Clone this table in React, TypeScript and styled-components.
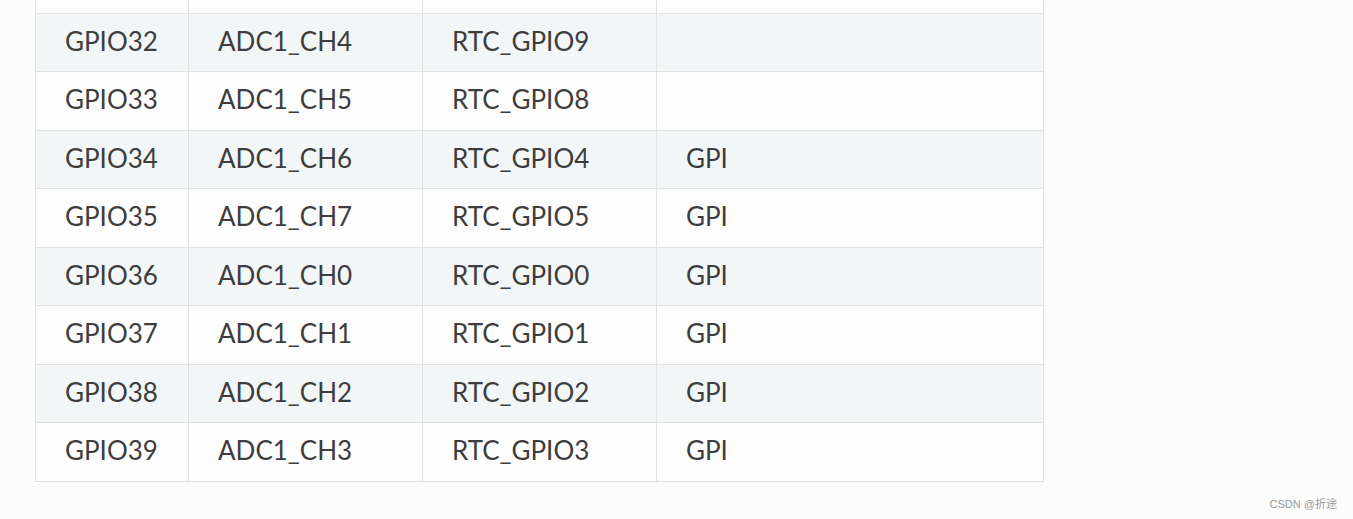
import React from 'react';
import styled, { createGlobalStyle } from 'styled-components';

const GlobalStyle = createGlobalStyle`
  html, body {
    margin: 0;
    padding: 0;
    background: #fcfcfc;
  }
  body {
    font-family: Lato, "Noto Sans", sans-serif;
  }
`;

const pins = [
  { gpio: 'GPIO32', adc: 'ADC1_CH4', rtc: 'RTC_GPIO9', mode: '' },
  { gpio: 'GPIO33', adc: 'ADC1_CH5', rtc: 'RTC_GPIO8', mode: '' },
  { gpio: 'GPIO34', adc: 'ADC1_CH6', rtc: 'RTC_GPIO4', mode: 'GPI' },
  { gpio: 'GPIO35', adc: 'ADC1_CH7', rtc: 'RTC_GPIO5', mode: 'GPI' },
  { gpio: 'GPIO36', adc: 'ADC1_CH0', rtc: 'RTC_GPIO0', mode: 'GPI' },
  { gpio: 'GPIO37', adc: 'ADC1_CH1', rtc: 'RTC_GPIO1', mode: 'GPI' },
  { gpio: 'GPIO38', adc: 'ADC1_CH2', rtc: 'RTC_GPIO2', mode: 'GPI' },
  { gpio: 'GPIO39', adc: 'ADC1_CH3', rtc: 'RTC_GPIO3', mode: 'GPI' },
];

const App = () => {
  return (
    <Page>
      <GlobalStyle />
      <PinTable>
        <colgroup>
          <col style={{ width: 153 }} />
          <col style={{ width: 234 }} />
          <col style={{ width: 234 }} />
          <col style={{ width: 387 }} />
        </colgroup>
        <tbody>
          <Row $striped={false} $cut>
            <Cell />
            <Cell />
            <Cell />
            <Cell />
          </Row>
          {pins.map((p, i) => (
            <Row key={p.gpio} $striped={i % 2 === 0}>
              <Cell>{p.gpio}</Cell>
              <Cell>{p.adc}</Cell>
              <Cell>{p.rtc}</Cell>
              <Cell>{p.mode}</Cell>
            </Row>
          ))}
        </tbody>
      </PinTable>
      <Footer>
        <Watermark>CSDN @折途</Watermark>
      </Footer>
    </Page>
  );
};

export default App;

const Page = styled.div`
  width: 1353px;
  height: 519px;
  padding-left: 35px;
  box-sizing: border-box;
  display: flex;
  flex-direction: column;
  overflow: hidden;
`;

const PinTable = styled.table`
  border-collapse: collapse;
  table-layout: fixed;
  width: 1008px;
  color: #3d3d3d;
  font-size: 26px;
`;

const Row = styled.tr<{ $striped: boolean; $cut?: boolean }>`
  height: ${({ $cut }) => ($cut ? '13px' : '58.5px')};
  background-color: ${({ $striped }) => ($striped ? '#f3f6f7' : '#fdfdfd')};
`;

const Cell = styled.td`
  border: 1px solid #e1e1e1;
  padding: 0 0 3px 29px;
  line-height: 1;
  white-space: nowrap;
  vertical-align: middle;
  tr:first-child > & {
    border-top: none;
    padding: 0;
  }
`;

const Footer = styled.div`
  flex: 1;
  display: flex;
  justify-content: flex-end;
  align-items: flex-end;
  padding: 0 16px 8px 0;
`;

const Watermark = styled.span`
  font-family: "Liberation Sans", "Noto Sans CJK SC", sans-serif;
  font-size: 11px;
  color: #999;
`;
